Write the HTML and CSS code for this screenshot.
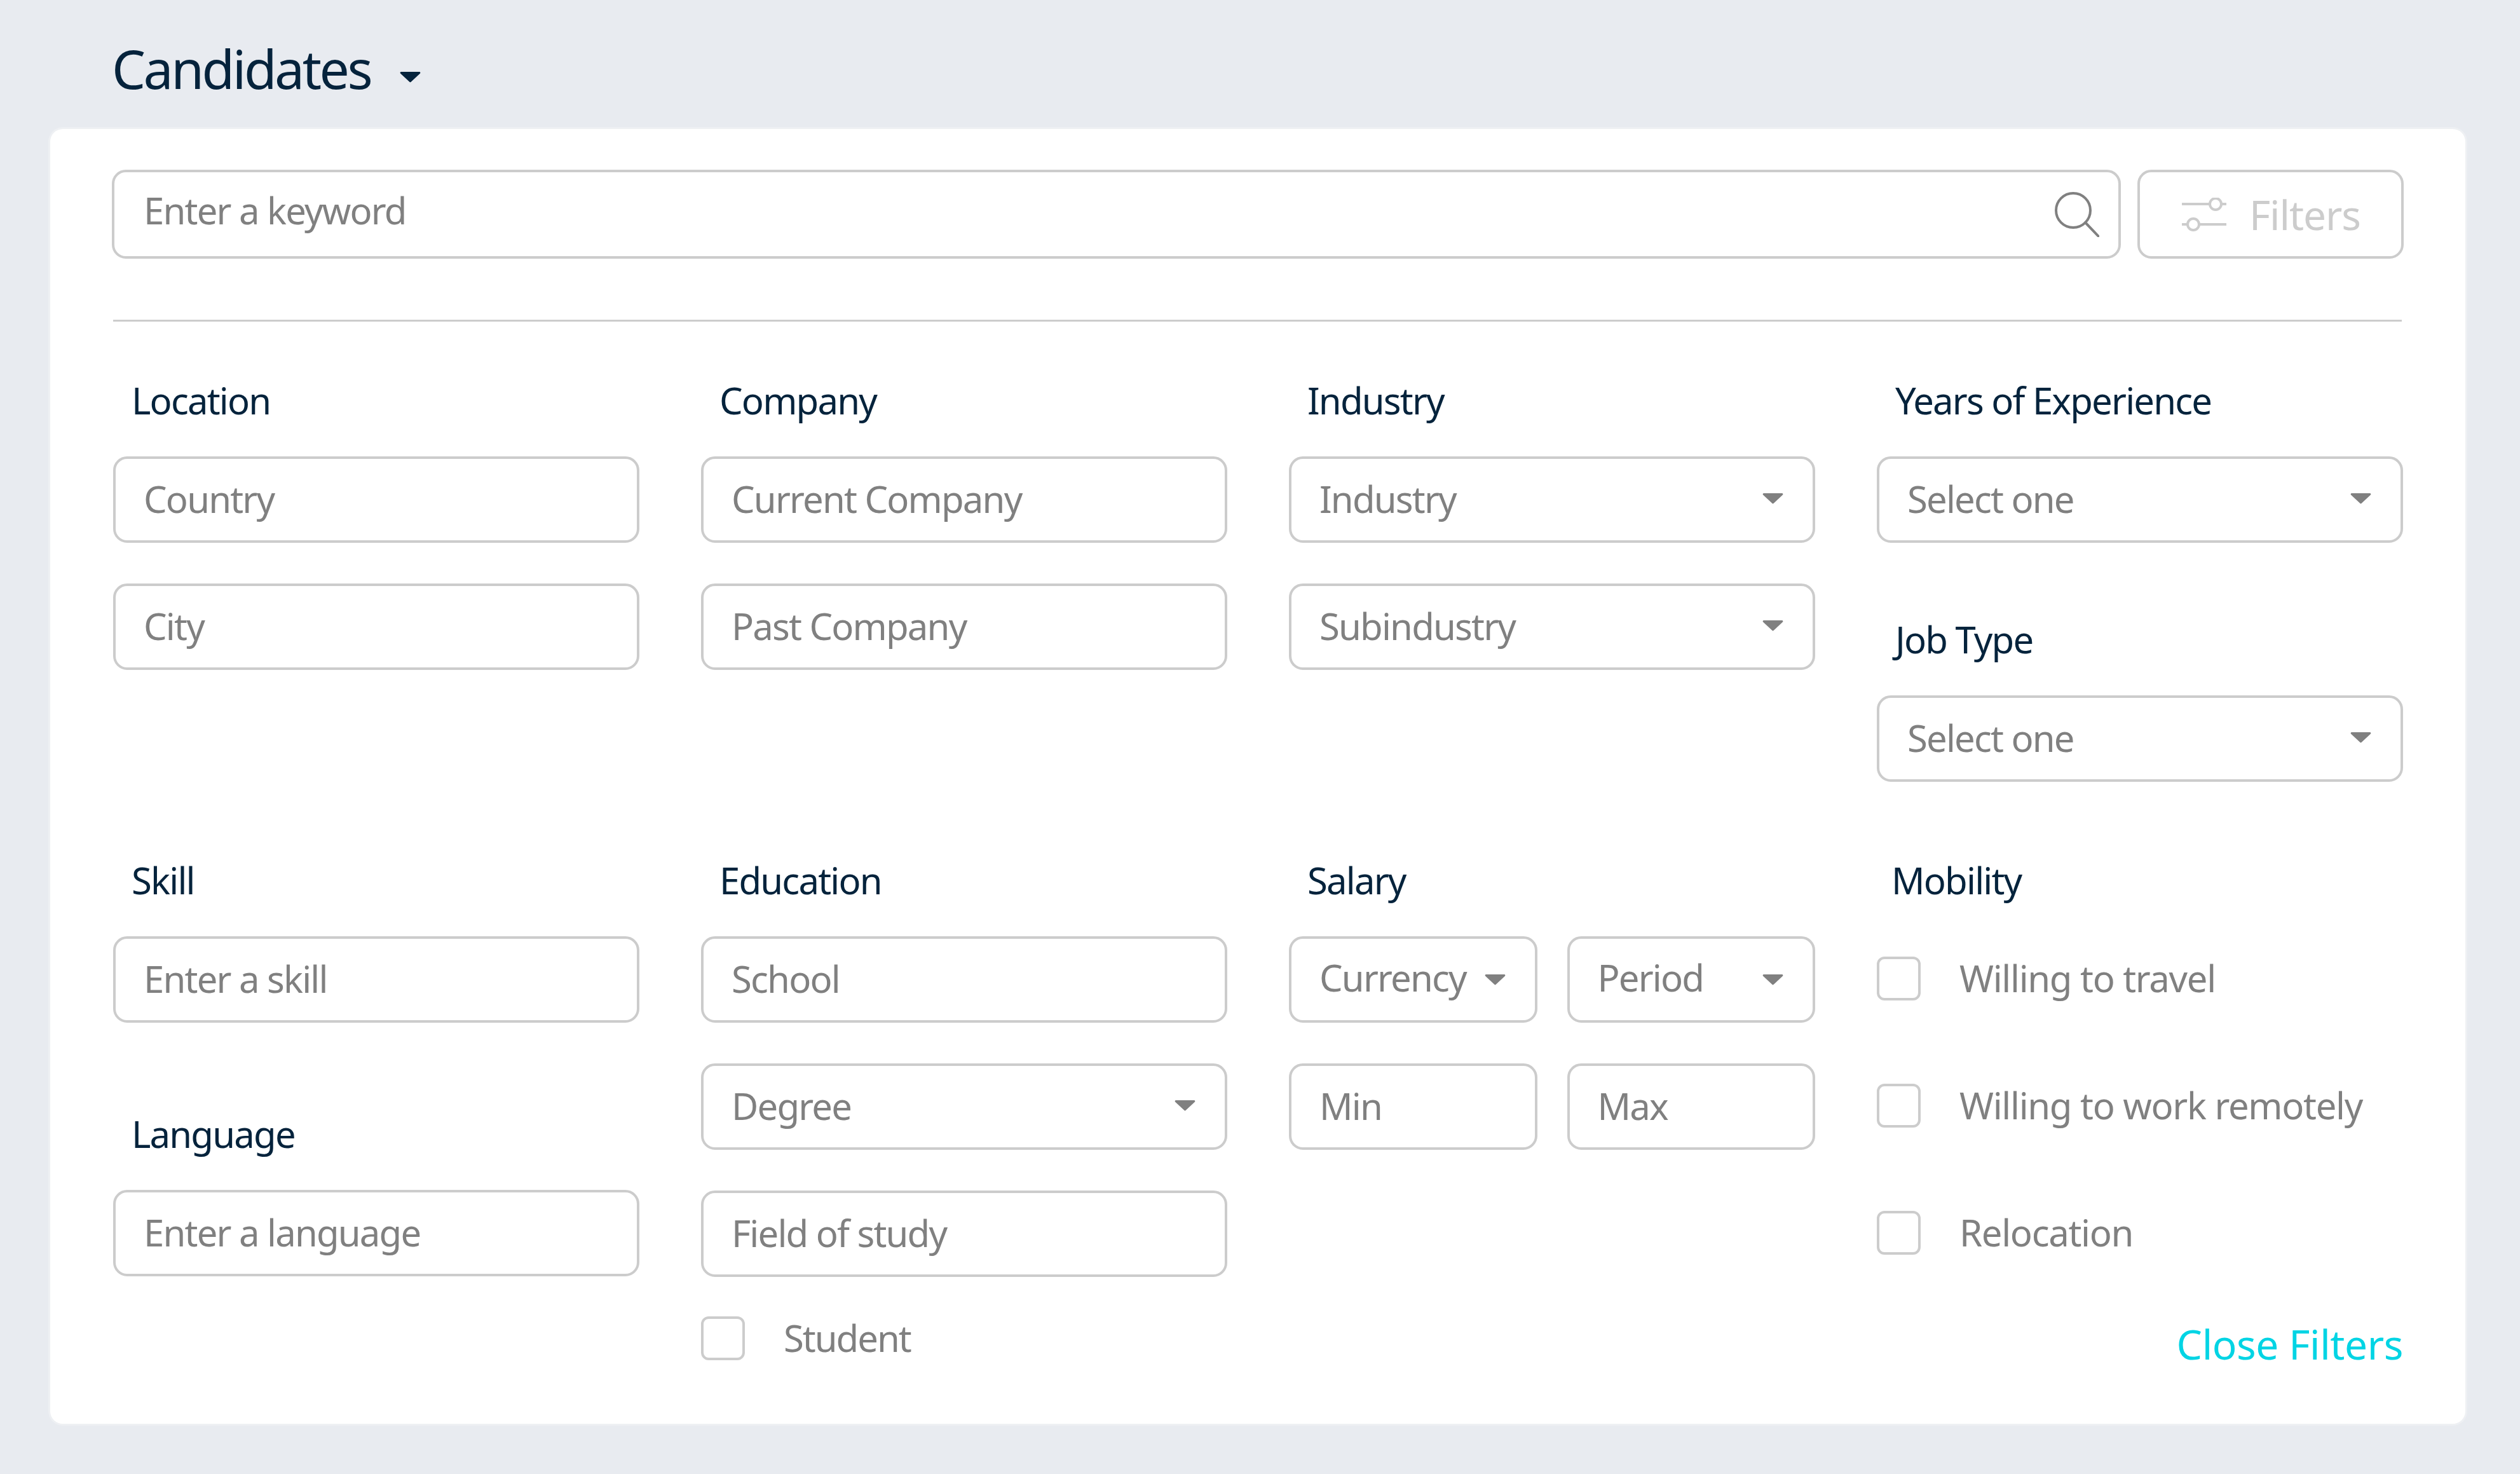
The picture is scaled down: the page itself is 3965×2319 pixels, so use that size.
FILE: index.html
```html
<!DOCTYPE html>
<html>
<head>
<title>Candidates</title>
<link rel="stylesheet" href="styles.css">
</head>
<body>
<div class="page">
  <div class="page-title">
    <h1>Candidates</h1>
    <svg class="title-caret" viewBox="0 0 33 18"><path d="M2 1h29a1.500 1.500 0 0 1 1 2.500L17.500 17a1.500 1.500 0 0 1-2 0L1 3.500A1.500 1.500 0 0 1 2 1z"/></svg>
  </div>
  <div class="card">
    <div class="search-row">
      <div class="field search">
        <span>Enter a keyword</span>
        <svg class="search-icon" viewBox="0 0 70 71"><circle cx="29" cy="29" r="27"/><path d="M48 48l21 22"/></svg>
      </div>
      <div class="filters-btn">
        <svg class="filters-icon" viewBox="0 0 70 53"><path d="M0 10h43M63 10h7M0 42h9M28 42h42"/><circle cx="53" cy="10" r="9"/><circle cx="18" cy="42" r="9"/></svg>
        <span>Filters</span>
      </div>
    </div>
    <div class="divider"></div>
    <div class="filter-grid top">
      <div class="group">
        <div class="group-label">Location</div>
        <div class="field">Country</div>
        <div class="field">City</div>
      </div>
      <div class="group">
        <div class="group-label">Company</div>
        <div class="field">Current Company</div>
        <div class="field">Past Company</div>
      </div>
      <div class="group">
        <div class="group-label">Industry</div>
        <div class="field select"><span>Industry</span><svg class="caret" viewBox="0 0 33 18"><path d="M2 1h29a1.500 1.500 0 0 1 1 2.500L17.500 17a1.500 1.500 0 0 1-2 0L1 3.500A1.500 1.500 0 0 1 2 1z"/></svg></div>
        <div class="field select"><span>Subindustry</span><svg class="caret" viewBox="0 0 33 18"><path d="M2 1h29a1.500 1.500 0 0 1 1 2.500L17.500 17a1.500 1.500 0 0 1-2 0L1 3.500A1.500 1.500 0 0 1 2 1z"/></svg></div>
      </div>
      <div class="group">
        <div class="group-label">Years of Experience</div>
        <div class="field select"><span>Select one</span><svg class="caret" viewBox="0 0 33 18"><path d="M2 1h29a1.500 1.500 0 0 1 1 2.500L17.500 17a1.500 1.500 0 0 1-2 0L1 3.500A1.500 1.500 0 0 1 2 1z"/></svg></div>
        <div class="group-label sub">Job Type</div>
        <div class="field select"><span>Select one</span><svg class="caret" viewBox="0 0 33 18"><path d="M2 1h29a1.500 1.500 0 0 1 1 2.500L17.500 17a1.500 1.500 0 0 1-2 0L1 3.500A1.500 1.500 0 0 1 2 1z"/></svg></div>
      </div>
    </div>
    <div class="filter-grid bottom">
      <div class="group">
        <div class="group-label">Skill</div>
        <div class="field">Enter a skill</div>
        <div class="group-label sub language">Language</div>
        <div class="field">Enter a language</div>
      </div>
      <div class="group">
        <div class="group-label">Education</div>
        <div class="field">School</div>
        <div class="field select"><span>Degree</span><svg class="caret" viewBox="0 0 33 18"><path d="M2 1h29a1.500 1.500 0 0 1 1 2.500L17.500 17a1.500 1.500 0 0 1-2 0L1 3.500A1.500 1.500 0 0 1 2 1z"/></svg></div>
        <div class="field">Field of study</div>
        <div class="check student"><div class="box"></div><span>Student</span></div>
      </div>
      <div class="group">
        <div class="group-label">Salary</div>
        <div class="pair">
          <div class="field select small"><span>Currency</span><svg class="caret" viewBox="0 0 33 18"><path d="M2 1h29a1.500 1.500 0 0 1 1 2.500L17.500 17a1.500 1.500 0 0 1-2 0L1 3.500A1.500 1.500 0 0 1 2 1z"/></svg></div>
          <div class="field select small"><span>Period</span><svg class="caret" viewBox="0 0 33 18"><path d="M2 1h29a1.500 1.500 0 0 1 1 2.500L17.500 17a1.500 1.500 0 0 1-2 0L1 3.500A1.500 1.500 0 0 1 2 1z"/></svg></div>
        </div>
        <div class="pair">
          <div class="field small">Min</div>
          <div class="field small">Max</div>
        </div>
      </div>
      <div class="group">
        <div class="group-label mobility">Mobility</div>
        <div class="check"><div class="box"></div><span>Willing to travel</span></div>
        <div class="check"><div class="box"></div><span>Willing to work remotely</span></div>
        <div class="check"><div class="box"></div><span>Relocation</span></div>
        <a class="close-link" href="#">Close Filters</a>
      </div>
    </div>
  </div>
</div>
</body>
</html>
```

FILE: styles.css
```css
* {
    box-sizing: border-box;
}

html, body {
    margin: 0;
    padding: 0;
}

body {
    width: 3965px;
    height: 2319px;
    overflow: hidden;
    background-color: #e8ebf0;
    font-family: "Noto Sans", sans-serif;
    font-size: 58px;
    font-weight: 380;
    font-stretch: 90%;
    letter-spacing: -1.800px;
    color: #808080;
}

.page {
    padding: 0 86px 0 79px;
}

.page-title {
    height: 203px;
    padding: 48px 0 0 97px;
    display: flex;
    align-items: flex-start;
}

.page-title h1 {
    margin: 0;
    font-size: 84px;
    font-weight: 380;
    letter-spacing: -3.500px;
    line-height: 120px;
    color: #05233c;
}

.title-caret {
    width: 33px;
    height: 18px;
    margin: 64px 0 0 46px;
    fill: #05233c;
}

.card {
    height: 2037px;
    padding: 64px 97px 0 97px;
    background-color: #fff;
    border-radius: 20px;
    box-shadow: 0 0 0 3px #eef0f3;
}

.search-row {
    display: flex;
    gap: 26px;
}

.field {
    height: 136px;
    padding: 0 48px 4px 44px;
    display: flex;
    align-items: center;
    justify-content: space-between;
    border: 4px solid #ccc;
    border-radius: 22px;
    background-color: #fff;
    white-space: nowrap;
}

.select {
    padding-right: 46px;
}

.search {
    flex: 1;
    height: 140px;
    padding: 0 30px 14px 46px;
}

.search-icon {
    width: 70px;
    height: 71px;
    margin-top: 14px;
    fill: none;
    stroke: #808080;
    stroke-width: 4;
    stroke-linecap: round;
}

.filters-btn {
    width: 419px;
    height: 140px;
    display: flex;
    align-items: center;
    padding-left: 66px;
    gap: 36px;
    border: 4px solid #ccc;
    border-radius: 22px;
    color: #ccc;
    font-size: 64px;
    letter-spacing: -1.100px;
}

.filters-icon {
    width: 70px;
    height: 53px;
    fill: none;
    stroke: #ccc;
    stroke-width: 4;
}

.divider {
    height: 3px;
    margin: 96px 3px 0 2px;
    background-color: #ccc;
}

.filter-grid {
    display: grid;
    grid-template-columns: repeat(4, 828px);
    column-gap: 97px;
    padding-left: 2px;
}

.filter-grid.top {
    height: 841px;
    padding-top: 86px;
}

.group {
    display: flex;
    flex-direction: column;
    gap: 64px;
    position: relative;
}

.group-label {
    height: 84px;
    margin-bottom: -22px;
    padding-left: 29px;
    line-height: 76px;
    color: #05233c;
    white-space: nowrap;
}

.group-label.sub {
    margin-top: 50px;
}

.group-label.language {
    margin-top: 73px;
}

.group-label.mobility {
    padding-left: 23px;
}

.pair {
    display: flex;
    gap: 47px;
}

.small {
    flex: 1;
    min-width: 0;
    padding-right: 46px;
}

.select.small {
    padding-bottom: 8px;
}

.select.small .caret {
    margin-top: 8px;
}

.caret {
    flex: none;
    width: 33px;
    height: 18px;
    fill: #808080;
}

.check {
    height: 136px;
    padding-bottom: 4px;
    display: flex;
    align-items: center;
    gap: 61px;
    letter-spacing: -1.300px;
    white-space: nowrap;
}

.check span {
    margin-bottom: 2px;
}

.check.student {
    height: 69px;
    padding-bottom: 0;
    margin-top: -2px;
    gap: 61px;
    letter-spacing: -2px;
}

.box {
    flex: none;
    width: 69px;
    height: 69px;
    border: 4px solid #ccc;
    border-radius: 12px;
}

.close-link {
    position: absolute;
    right: 0;
    top: 726px;
    font-size: 64px;
    line-height: 84px;
    letter-spacing: -0.400px;
    color: #00d4e4;
    text-decoration: none;
    white-space: nowrap;
}
```
